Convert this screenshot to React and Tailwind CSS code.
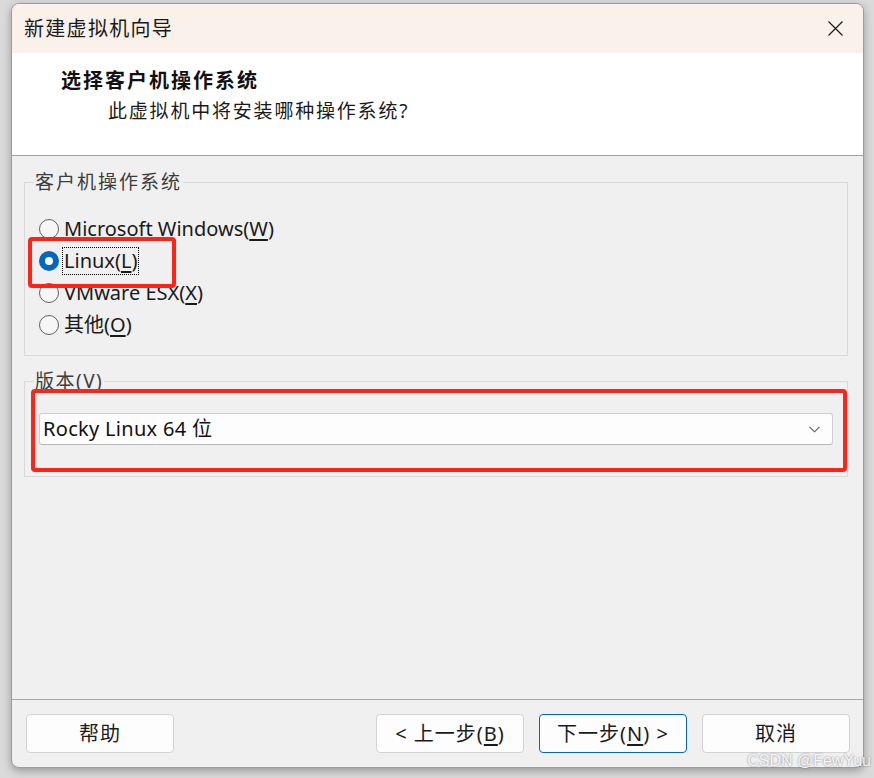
import React from 'react';

const font = "font-['Noto_Sans','Noto_Sans_CJK_SC',sans-serif]";

function Radio({ checked, label, hotkey, rest, focused }) {
  return (
    <div className="h-[32px] flex items-center">
      {checked ? (
        <span className="w-[20px] h-[20px] rounded-full bg-[#0067c0] flex items-center justify-center">
          <span className="w-[8px] h-[8px] rounded-full bg-white" />
        </span>
      ) : (
        <span className="w-[20px] h-[20px] rounded-full border border-[#616161] bg-[#f6f6f6]" />
      )}
      <span className={`ml-[4px] text-[20px] leading-[26px] text-[#1a1a1a] px-[1px] ${focused ? 'outline outline-1 outline-dotted outline-black' : ''}`}>
        {label}(<span className="underline underline-offset-[3px]">{hotkey}</span>){rest}
      </span>
    </div>
  );
}

function Button({ children, primary }) {
  return (
    <div
      className={`w-[148px] h-[39px] rounded-[4px] flex items-center justify-center text-[20px] tracking-[1px] text-[#1b1b1b] bg-[#fdfdfd] border ${
        primary ? 'border-[#0067c0]' : 'border-[#d3d3d3]'
      }`}
    >
      {children}
    </div>
  );
}

export default function App() {
  return (
    <div className={`w-[874px] h-[778px] bg-[#dadada] pt-[3px] pl-[11px] overflow-hidden relative ${font}`}>
      <div className="w-[853px] h-[765px] rounded-[8px] border border-[#9c9c9c] bg-[#f0f0f0] overflow-hidden flex flex-col shadow-[0_3px_8px_rgba(0,0,0,0.3)]">
        {/* title bar */}
        <div className="h-[49px] bg-[#f9f1ea] flex items-center justify-between pl-[12px] pr-[20px] shrink-0">
          <span className="text-[20px] tracking-[1.3px] text-[#1a1a1a]">新建虚拟机向导</span>
          <svg width="15" height="15" viewBox="0 0 15 15" fill="none" stroke="#1a1a1a" strokeWidth="1.2">
            <path d="M0.5 0.5L14.5 14.5M14.5 0.5L0.5 14.5" />
          </svg>
        </div>

        {/* header */}
        <div className="h-[103px] bg-white border-b border-[#a0a0a0] shrink-0 pt-[14px]">
          <div className="pl-[49px] text-[20px] leading-[28px] font-bold tracking-[2px] text-[#111]">选择客户机操作系统</div>
          <div className="pl-[96px] mt-[2px] text-[19px] leading-[28px] tracking-[1.8px] text-[#1a1a1a]">此虚拟机中将安装哪种操作系统?</div>
        </div>

        {/* body */}
        <div className="flex-1 pl-[12px] pr-[15px] pt-[26px]">
          <div className="relative h-[174px] border border-[#d9d9d9] pt-[30px] pl-[14px]">
            <span className="absolute left-[9px] top-[-14px] px-[1px] bg-[#f0f0f0] text-[19px] leading-[26px] tracking-[2px] text-[#3c3c3c]">客户机操作系统</span>
            <Radio label="Microsoft Windows" hotkey="W" />
            <Radio checked focused label="Linux" hotkey="L" />
            <Radio label="VMware ESX" hotkey="X" />
            <Radio label="其他" hotkey="O" />
          </div>

          <div className="relative mt-[25px] h-[96px] border border-[#d9d9d9] pt-[31px] px-[14px]">
            <span className="absolute left-[9px] top-[-14px] px-[1px] bg-[#f0f0f0] text-[19px] leading-[26px] tracking-[1.5px] text-[#3c3c3c]">版本(V)</span>
            <div className="h-[32px] bg-[#fdfdfd] border border-[#cfcfcf] border-b-[#b8b8b8] rounded-[3px] flex items-center justify-between pl-[3px] pr-[12px]">
              <span className="text-[20px] tracking-[0.3px] text-[#111]">Rocky Linux 64 位</span>
              <svg width="11" height="7" viewBox="0 0 11 7" fill="none" stroke="#5a5a5a" strokeWidth="1.1">
                <path d="M0.5 0.8L5.5 5.8L10.5 0.8" />
              </svg>
            </div>
          </div>
        </div>

        {/* footer */}
        <div className="h-[68px] border-t border-[#a8a8a8] shrink-0 flex items-start pt-[14px] pl-[14px] pr-[13px]">
          <Button>帮助</Button>
          <div className="flex-1" />
          <div className="flex gap-[15px]">
            <Button>&lt; 上一步(<span className="underline underline-offset-[3px]">B</span>)</Button>
            <Button primary>下一步(<span className="underline underline-offset-[3px]">N</span>) &gt;</Button>
            <Button>取消</Button>
          </div>
        </div>
      </div>

      {/* red annotation boxes */}
      <div className="absolute left-[28px] top-[237px] w-[148px] h-[51px] border-[4px] border-[#ff2417] rounded-[4px]" />
      <div className="absolute left-[31px] top-[389px] w-[816px] h-[83px] border-[4px] border-[#ff2417] rounded-[4px]" />

      {/* watermark */}
      <span className="absolute right-[3px] bottom-[5px] text-[16px] text-white/90 [text-shadow:0_0_2px_rgba(0,0,0,0.5)] font-['Liberation_Sans',sans-serif]">CSDN @FewYuu</span>
    </div>
  );
}
